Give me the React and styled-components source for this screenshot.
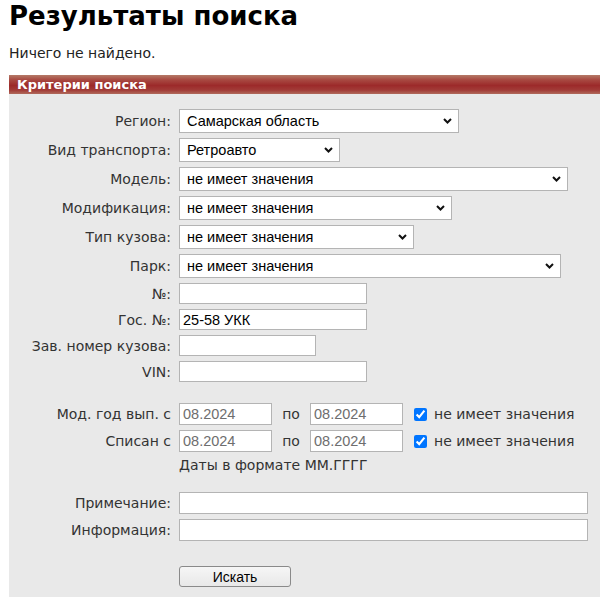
import React from "react";
import styled, { createGlobalStyle } from "styled-components";

const Global = createGlobalStyle`
  html, body { margin: 0; padding: 0; background: #fff; overflow: hidden; }
  body { font-family: "DejaVu Sans", Verdana, sans-serif; color: #222; }
`;

const Page = styled.div`
  padding-left: 9px;
`;

const Title = styled.h1`
  margin: 1px 0 0;
  font-family: "DejaVu Sans", Verdana, sans-serif;
  font-weight: bold;
  font-size: 26px;
  line-height: 30px;
  color: #000;
`;

const Notice = styled.p`
  margin: 14px 0 0;
  font-size: 14px;
  line-height: 16px;
  color: #222;
`;

const Panel = styled.section`
  margin-top: 14px;
  background: #e9e9e9;
`;

const PanelHead = styled.div`
  height: 19px;
  line-height: 19px;
  padding-left: 8px;
  color: #fff;
  font-weight: bold;
  font-size: 13px;
  background: linear-gradient(
    #b47a68 0%,
    #a84a42 25%,
    #9c2a2a 55%,
    #a23c38 80%,
    #b06a5c 100%
  );
`;

const Form = styled.form`
  display: flex;
  flex-direction: column;
  gap: 5px;
  padding: 15px 0 10px;
`;

const Row = styled.div`
  display: flex;
  align-items: center;
  margin-top: ${(p) => p.$space || 0}px;
`;

const Label = styled.label`
  flex: 0 0 163px;
  box-sizing: border-box;
  padding-right: 1px;
  margin-right: 7px;
  text-align: right;
  font-size: 14px;
  color: #333;
  white-space: nowrap;
`;

const field = `
  box-sizing: border-box;
  border: 1px solid #b4b4b4;
  background: #fff;
  font-family: "Liberation Sans", Arial, sans-serif;
  font-size: 14.5px;
  color: #000;
  margin: 0;
  outline: none;
`;

const SelectWrap = styled.div`
  position: relative;
  width: ${(p) => p.$w}px;
  height: 24px;
`;

const Select = styled.select`
  ${field}
  appearance: none;
  -webkit-appearance: none;
  width: 100%;
  height: 100%;
  padding: 0 24px 0 7px;
  border-radius: 0;
`;

const Chevron = styled.svg`
  position: absolute;
  right: 7px;
  top: 9px;
  width: 9px;
  height: 6px;
  pointer-events: none;
`;

const Input = styled.input`
  ${field}
  width: ${(p) => p.$w}px;
  height: ${(p) => p.$h || 22}px;
  padding: 0 3px;
  color: ${(p) => (p.$muted ? "#6e6e6e" : "#000")};
`;

const Sep = styled.span`
  flex: 0 0 38px;
  text-align: center;
  font-size: 14px;
  color: #333;
`;

const Check = styled.input`
  width: 13px;
  height: 13px;
  margin: 0 7px 0 11px;
  accent-color: #0075ff;
`;

const CheckText = styled.span`
  font-size: 14px;
  color: #333;
  white-space: nowrap;
`;

const Hint = styled.div`
  margin-left: 170px;
  font-size: 14px;
  line-height: 16px;
  color: #333;
`;

const Button = styled.button`
  margin-left: 170px;
  width: 112px;
  height: 21px;
  box-sizing: border-box;
  border: 1px solid #8a8a8a;
  border-radius: 3px;
  background: linear-gradient(#f6f6f6, #e8e8e8);
  font-family: "Liberation Sans", Arial, sans-serif;
  font-size: 14px;
  color: #000;
  padding: 0;
`;

function Dropdown({ w, value }) {
  return (
    <SelectWrap $w={w}>
      <Select defaultValue={value}>
        <option>{value}</option>
      </Select>
      <Chevron viewBox="0 0 9 6">
        <path d="M1 1 L4.5 4.5 L8 1" fill="none" stroke="#111" strokeWidth="2" />
      </Chevron>
    </SelectWrap>
  );
}

const selects = [
  ["Регион:", 280, "Самарская область"],
  ["Вид транспорта:", 161, "Ретроавто"],
  ["Модель:", 389, "не имеет значения"],
  ["Модификация:", 273, "не имеет значения"],
  ["Тип кузова:", 235, "не имеет значения"],
  ["Парк:", 382, "не имеет значения"],
];

const texts = [
  ["№:", 188, ""],
  ["Гос. №:", 188, "25-58 УКК"],
  ["Зав. номер кузова:", 137, ""],
  ["VIN:", 188, ""],
];

function DateRow({ label, space }) {
  return (
    <Row $space={space}>
      <Label>{label}</Label>
      <Input $w={93} $muted defaultValue="08.2024" />
      <Sep>по</Sep>
      <Input $w={93} $muted defaultValue="08.2024" />
      <Check type="checkbox" defaultChecked />
      <CheckText>не имеет значения</CheckText>
    </Row>
  );
}

export default function App() {
  return (
    <Page>
      <Global />
      <Title>Результаты поиска</Title>
      <Notice>Ничего не найдено.</Notice>
      <Panel>
        <PanelHead>Критерии поиска</PanelHead>
        <Form onSubmit={(e) => e.preventDefault()}>
          {selects.map(([label, w, value]) => (
            <Row key={label}>
              <Label>{label}</Label>
              <Dropdown w={w} value={value} />
            </Row>
          ))}
          {texts.map(([label, w, value]) => (
            <Row key={label}>
              <Label>{label}</Label>
              <Input $w={w} $h={21} defaultValue={value} />
            </Row>
          ))}
          <DateRow label="Мод. год вып. с" space={16} />
          <DateRow label="Списан с" />
          <Hint>Даты в формате ММ.ГГГГ</Hint>
          <Row $space={14}>
            <Label>Примечание:</Label>
            <Input $w={409} />
          </Row>
          <Row>
            <Label>Информация:</Label>
            <Input $w={409} />
          </Row>
          <Row $space={20}>
            <Button type="submit">Искать</Button>
          </Row>
        </Form>
      </Panel>
    </Page>
  );
}
